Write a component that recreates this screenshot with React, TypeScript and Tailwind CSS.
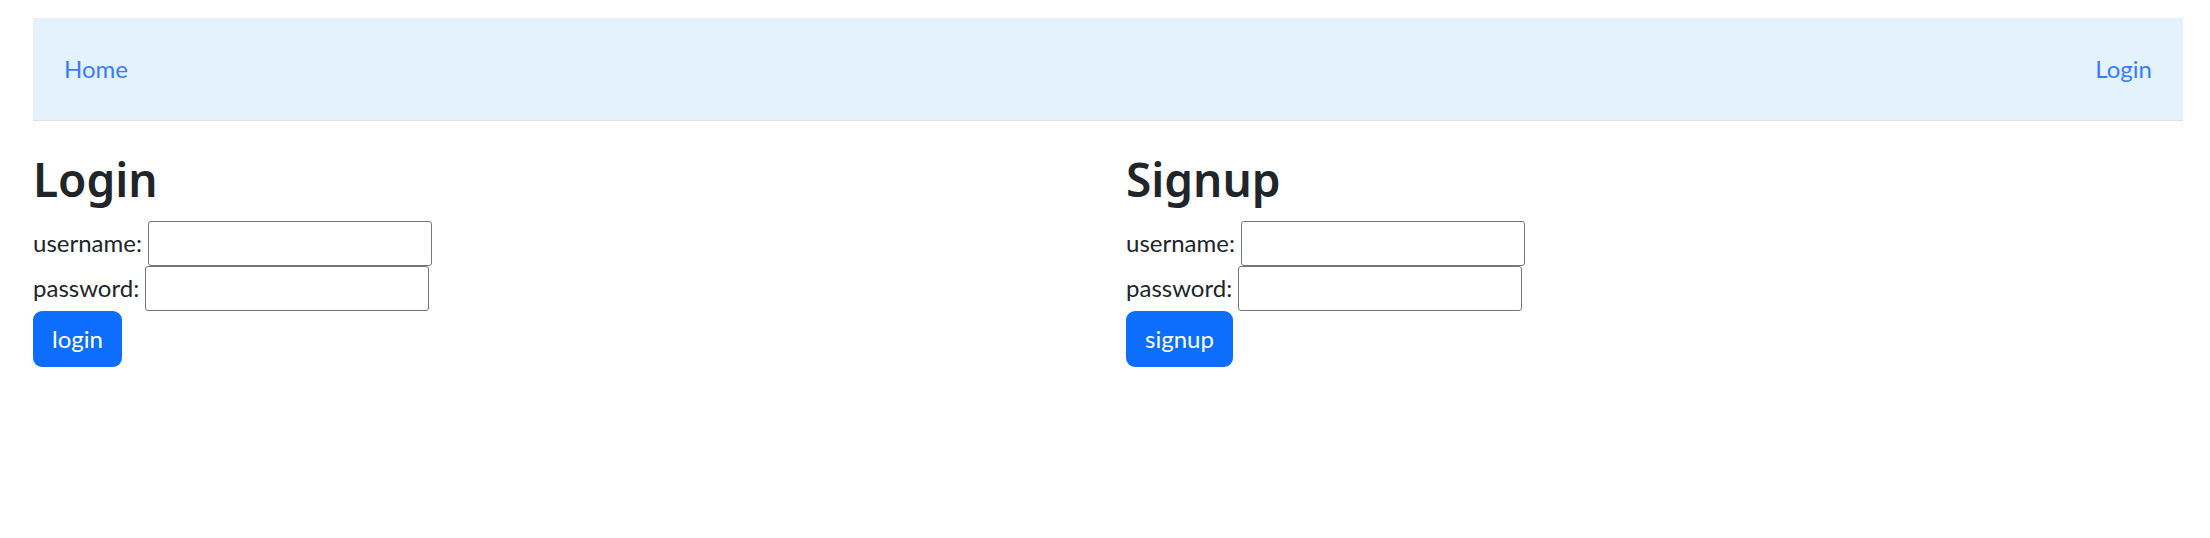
export default function App() {
  const Section = ({ title, action }: { title: string; action: string }) => (
    <div className="flex flex-col items-start">
      <h2 className="mt-[30px] mb-[12px] font-['Noto_Sans',sans-serif] text-[46px] leading-[57.6px] font-semibold">{title}</h2>
      <div className="flex h-[45px] items-center">
        <label>username:</label>
        <input type="text" className="ml-[6px] h-[45px] w-[284px] rounded-[3px] border border-[#767676] bg-white px-[3px] outline-none" />
      </div>
      <div className="flex h-[45px] items-center">
        <label>password:</label>
        <input type="password" className="ml-[6px] h-[45px] w-[284px] rounded-[3px] border border-[#767676] bg-white px-[3px] outline-none" />
      </div>
      <button className="h-[56px] rounded-[9px] bg-[#0d6efd] px-[19px] text-[24px] leading-[36px] text-white">{action}</button>
    </div>
  );
  return (
    <div className="min-h-[538px] bg-white pl-[33px] pr-[27px] pt-[18px] font-['Lato','Noto_Sans',sans-serif] text-[24px] leading-[36px] text-[#212529]">
      <nav className="flex h-[103px] items-center justify-between border-b border-[#dee2e6] bg-[#e3f2fd] px-[31px]">
        <a className="text-[#3a7dfb]">Home</a>
        <a className="text-[#3a7dfb]">Login</a>
      </nav>
      <div className="grid grid-cols-2 gap-x-[36px]">
        <Section title="Login" action="login" />
        <Section title="Signup" action="signup" />
      </div>
    </div>
  );
}
